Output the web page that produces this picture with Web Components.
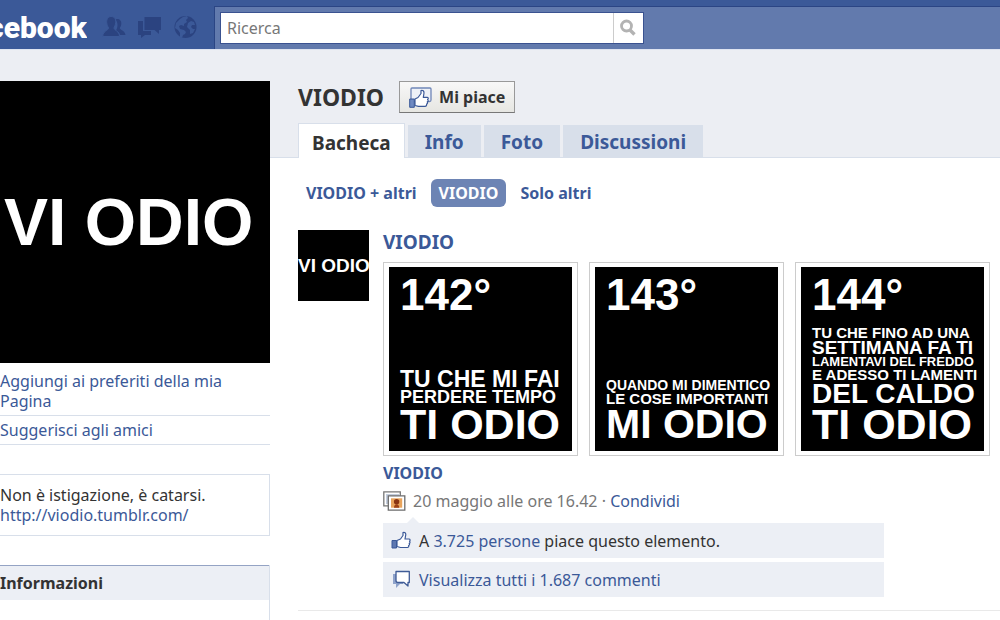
<!DOCTYPE html>
<html lang="it">
<head>
<meta charset="utf-8">
<title>VIODIO</title>
<style>
  body { margin: 0; background: #fff; color: #333; font: 16px/20px "Noto Sans", "Open Sans", sans-serif; }
</style>
</head>
<body>
<fan-page></fan-page>

<script>
const define = (name, html) => customElements.define(name, class extends HTMLElement {
  constructor() {
    super();
    this.attachShadow({ mode: "open" }).innerHTML = html;
  }
});

/* icons */
define("icon-friends", `<style>:host{display:block}svg{display:block}</style>
<svg width="24" height="24" viewBox="0 0 24 24" fill="#2b4380"><path d="M15 4c3 0 4.600 2 4.300 5-.2 2-1 3-1.500 4 0 2 5.200 2.400 5.700 7H18c-.5-2.500-2-3.500-4.200-4.600.9-1.200 1.700-3 1.700-5.400 0-2.500-.9-4.500-2.200-5.500z"/><path d="M9 1.500c3.500 0 5 2.500 4.700 6-.2 2.600-1.400 4-1.700 5.500 0 2.500 5.500 2.800 5.500 8.500H.8c0-5.700 5.700-6 5.700-8.500-.5-1.500-1.700-3-1.800-5.500C4.500 4.200 6 1.500 9 1.500z" stroke="#3b5998"/></svg>`);

define("icon-messages", `<style>:host{display:block}svg{display:block}</style>
<svg width="24" height="24" viewBox="0 0 24 24" fill="#2b4380"><path d="M0 6h5v10h8v4H7l-4 3v-3H0z"/><path d="M6.500 2H23v13h-2v4l-4.500-4h-10z"/></svg>`);

define("icon-globe", `<style>:host{display:block}svg{display:block}</style>
<svg width="24" height="24" viewBox="0 0 24 24"><circle cx="11.500" cy="12" r="11" fill="#2b4380"/><path fill="#3b5998" d="M9 2l4-1 1 2-2 2 1 2-3 2 0 2-3-1-2 1 1 3 4 1 2 2-1 2-2 1-1 3-2-1 0-4-2-3-3-2 1-5 4-4zM17 6l3 1 1 3-3 0-1 2 2 2 2 0-2 4-3 1 0-4-3-3 1-4z"/></svg>`);

define("icon-search", `<style>:host{display:block}svg{display:block}</style>
<svg width="18" height="18" viewBox="0 0 18 18" fill="none" stroke="#b3b3b3"><circle cx="7.500" cy="7" r="5" stroke-width="2.800"/><path d="M11 11l4.500 4.500" stroke-width="3.400"/></svg>`);

define("icon-like", `<style>:host{display:block}svg{display:block}</style>
<svg width="20" height="19" viewBox="0 0 20 19" stroke-linejoin="round"><path d="M1 9.500h4.500V17H1z" fill="#5d77b0" stroke="#3b5998"/><path d="M6 9.500l3.500-1.500L12 4.500V1.500c1.800-.6 2.800.5 2.800 2.200L14 8h4c1.200 0 1.500 1.600.5 2.200.8.600.7 1.900-.3 2.200.6.700.4 1.800-.6 2.100.4.900 0 2-1.200 2H9.500L6 15.500z" fill="#fff" stroke="#3b5998" stroke-width="1.200"/></svg>`);

define("icon-like-page", `<style>:host{display:block}svg{display:block}</style>
<svg width="23" height="21" viewBox="0 0 23 21" stroke-linejoin="round"><path d="M2 13V2q0-1 1-1h18q1 0 1 1v11q0 1.500-1.500 1.500H2z" fill="#eef1f7" stroke="#6f86b8" stroke-width="1.300"/><path d="M.7 12h4.600v8.300H.7z" fill="#6f8ac2" stroke="#3b5998"/><path d="M6 12l3-1.500 3-4V3.500c2-.6 3 .6 3 2.500l-.7 4.300h3.700c1.400 0 1.700 1.700.6 2.300.9.700.7 2-.3 2.300.5.900.2 1.900-.7 2.100.3 1.200-.3 2.300-1.600 2.300H9.500L6 18.500z" fill="#fff" stroke="#3b5998" stroke-width="1.200"/></svg>`);

define("icon-comment", `<style>:host{display:block}svg{display:block}</style>
<svg width="20" height="19" viewBox="0 0 20 19" stroke-linejoin="round"><path d="M2 4v10h3v4l4-4h3V4z" fill="#8fa3cb"/><path d="M5 1.500h13.300v11H17V16l-4-3.500H7c-1.500 0-2-1-2-2z" fill="#fff" stroke="#3f5b96" stroke-width="1.300"/></svg>`);

define("icon-album", `<style>:host{display:block}svg{display:block}</style>
<svg width="23" height="20" viewBox="0 0 23 20"><path d="M.8.8h16.500v14H.8z" fill="#fff" stroke="#777" stroke-width="1.300"/><path d="M3 3h13v10H3z" fill="#c4cede"/><path d="M5.300 4.800h16.500v14.400H5.300z" fill="#fff" stroke="#6c6c6c" stroke-width="1.300"/><path d="M8 7.300h11.200v9.400H8z" fill="#e9a45c"/><circle cx="13.600" cy="10.800" r="2.700" fill="#8a3512"/><path d="M11 16.700c0-2 1-3.500 2.600-3.500s2.600 1.500 2.600 3.500z" fill="#9c4015"/></svg>`);

/* top bar */
define("top-bar", `<style>
  :host { display: flex; height: 50px; background: #3b5998; border-bottom: 1px solid #dfe4f0; box-sizing: border-box; }
  .logo { width: 87px; display: flex; justify-content: flex-end; overflow: hidden; color: #fff; font: 900 30px/56px "Roboto", sans-serif; text-decoration: none; }
  nav { display: flex; gap: 12px; padding: 15px 0 0 15px; }
  nav a { display: block; height: 24px; }
  .rest { flex: 1; margin-left: 16px; padding-top: 6px; }
  .panel { box-sizing: border-box; height: 43px; background: #627aad; border-top: 1px solid #2b4584; border-left: 1px solid #2b4584; padding: 5px 0 0 5px; }
  form { display: flex; width: 424px; height: 32px; box-sizing: border-box; border: 1px solid #3a5290; background: #fff; }
  input { flex: 1; min-width: 0; border: 0; padding: 0 6px; font: 16px/20px "Noto Sans", sans-serif; color: #777; background: none; outline: 0; }
  input::placeholder { color: #777; opacity: 1; }
  button { width: 30px; padding: 0 0 0 5px; border: 0; border-left: 1px solid #ccc; background: #fff; }
</style>
<a class="logo" href="#">cebook</a>
<nav>
  <a href="#" aria-label="Amici"><icon-friends></icon-friends></a>
  <a href="#" aria-label="Messaggi"><icon-messages></icon-messages></a>
  <a href="#" aria-label="Notifiche"><icon-globe></icon-globe></a>
</nav>
<div class="rest"><div class="panel"><form>
  <input type="text" placeholder="Ricerca" aria-label="Ricerca">
  <button type="button" aria-label="Cerca"><icon-search></icon-search></button>
</form></div></div>`);

/* left column */
define("side-links", `<style>
  :host { display: block; padding-top: 4px; }
  ::slotted(a) { display: block; color: #3b5998; text-decoration: none; padding: 4px 0; border-bottom: 1px solid #d8dfea; }
</style><slot></slot>`);

define("side-box", `<style>
  :host { display: block; border: 1px solid #d8dfea; border-left: 0; padding: 10px 0; }
</style><slot></slot>`);

define("side-section", `<style>
  :host { display: block; border-right: 1px solid #d8dfea; }
  h2 { margin: 0; padding: 7px 0; background: #eceff5; border-top: 1px solid #94a3c4; font-size: 16px; line-height: 20px; }
</style><h2><slot></slot></h2>`);

define("page-sidebar", `<style>
  :host { display: flex; flex-direction: column; width: 270px; flex: none; }
  .photo { background: #000; color: #fff; height: 282px; padding-left: 4px; display: flex; align-items: center; font: bold 66px/66px "Liberation Sans", sans-serif; white-space: nowrap; }
  a { color: #3b5998; text-decoration: none; }
  side-box { margin: 29px 0; }
  side-section { flex: 1; }
</style>
<div class="photo">VI ODIO</div>
<side-links><a href="#">Aggiungi ai preferiti della mia Pagina</a><a href="#">Suggerisci agli amici</a></side-links>
<side-box>Non è istigazione, è catarsi.<br><a href="#">http://viodio.tumblr.com/</a></side-box>
<side-section>Informazioni</side-section>`);

/* page title, like button, tabs */
define("page-head", `<style>
  :host { display: block; padding-left: 28px; border-bottom: 1px solid #d8dfea; }
  .title { display: flex; gap: 15px; height: 32px; align-items: center; }
  h1 { margin: 0; font-size: 23px; line-height: 32px; }
  button { display: flex; align-items: center; gap: 7px; height: 32px; padding: 0 9px; border: 1px solid #999; border-bottom-color: #777; background: linear-gradient(#f8f8f8, #e6e6e2); color: #333; font: bold 16px/20px "Noto Sans", sans-serif; }
  nav { display: flex; gap: 3px; align-items: flex-end; margin-top: 10px; }
  nav a { height: 32px; line-height: 34px; padding: 0 17px; background: #d8dfea; color: #3b5998; font-size: 19px; font-weight: bold; text-decoration: none; }
  nav a.on { height: 34px; line-height: 38px; padding: 0 13px; background: #fff; color: #333; border: 1px solid #d8dfea; border-bottom: 0; margin-bottom: -1px; }
</style>
<div class="title"><h1>VIODIO</h1><button type="button"><icon-like-page></icon-like-page>Mi piace</button></div>
<nav><a class="on" href="#">Bacheca</a><a href="#">Info</a><a href="#">Foto</a><a href="#">Discussioni</a></nav>`);

define("wall-filter", `<style>
  :host { display: flex; gap: 6px; }
  a { padding: 4px 8px; border-radius: 6px; color: #3b5998; font-size: 16px; line-height: 20px; font-weight: bold; text-decoration: none; }
  a.on { background: #6d84b4; color: #fff; }
</style>
<a href="#">VIODIO + altri</a><a class="on" href="#">VIODIO</a><a href="#">Solo altri</a>`);

/* a poster: number on top, lines of different sizes at the bottom */
customElements.define("odio-poster", class extends HTMLElement {
  connectedCallback() {
    const lines = JSON.parse(this.getAttribute("lines"));
    this.attachShadow({ mode: "open" }).innerHTML = `<style>
      :host { display: block; flex: none; box-sizing: border-box; width: 195px; height: 194px; padding: 4px; border: 1px solid #ccc; background: #fff; }
      a { box-sizing: border-box; height: 100%; display: flex; flex-direction: column; padding: 8px 0 8px 11px; margin: 0 1px 0 1px; background: #000; color: #fff; font-family: "Liberation Sans", sans-serif; font-weight: bold; white-space: nowrap; text-decoration: none; }
      .n { font-size: 44px; line-height: 40px; margin-bottom: auto; }
    </style><a href="#"><span class="n">${this.getAttribute("number")}</span>${
      lines.map(([text, size, height]) => `<span style="font-size:${size}px;line-height:${height}px">${text}</span>`).join("")
    }</a>`;
  }
});

define("wall-post", `<style>
  :host { display: flex; gap: 14px; padding-bottom: 13px; border-bottom: 1px solid #e9e9e9; }
  .avatar { flex: none; width: 71px; height: 71px; overflow: hidden; background: #000; color: #fff; font: bold 19px/71px "Liberation Sans", sans-serif; white-space: nowrap; text-decoration: none; }
  .body { flex: 1; min-width: 0; }
  .body a { color: #3b5998; text-decoration: none; }
  h3 { margin: 0; font-size: 19px; line-height: 24px; }
  .posters { display: flex; gap: 11px; margin-top: 8px; }
  h4 { margin: 7px 0 0; font-size: 16px; line-height: 20px; }
  .meta { display: flex; align-items: center; gap: 7px; margin-top: 8px; color: #777; }
  .feedback { position: relative; display: grid; gap: 4px; max-width: 501px; margin-top: 12px; }
  .feedback::before { content: ""; position: absolute; left: 24px; top: -6px; border: 6px solid transparent; border-top: 0; border-bottom-color: #eceff5; }
  .row { display: flex; align-items: center; gap: 8px; height: 35px; padding-left: 8px; background: #eceff5; }
</style>
<a class="avatar" href="#">VI ODIO</a>
<div class="body">
  <h3><a href="#">VIODIO</a></h3>
  <div class="posters">
    <odio-poster number="142°" lines='[["TU CHE MI FAI",23,20],["PERDERE TEMPO",18,17],["TI ODIO",43,37]]'></odio-poster>
    <odio-poster number="143°" lines='[["QUANDO MI DIMENTICO",14,13],["LE COSE IMPORTANTI",15,14],["MI ODIO",41,37]]'></odio-poster>
    <odio-poster number="144°" lines='[["TU CHE FINO AD UNA",15,14],["SETTIMANA FA TI",19,16],["LAMENTAVI DEL FREDDO",13,12],["E ADESSO TI LAMENTI",15,13],["DEL CALDO",28,25],["TI ODIO",43,37]]'></odio-poster>
  </div>
  <h4><a href="#">VIODIO</a></h4>
  <div class="meta"><icon-album></icon-album><span>20 maggio alle ore 16.42 · <a href="#">Condividi</a></span></div>
  <div class="feedback">
    <div class="row"><icon-like></icon-like><span>A <a href="#">3.725 persone</a> piace questo elemento.</span></div>
    <div class="row"><icon-comment></icon-comment><a href="#">Visualizza tutti i 1.687 commenti</a></div>
  </div>
</div>`);

define("fan-page", `<style>
  :host { display: flex; flex-direction: column; height: 100vh; overflow: hidden; }
  .content { flex: 1; display: flex; padding-top: 31px; background: linear-gradient(#eceef3 107px, #fff 107px); }
  main { flex: 1; min-width: 0; }
  wall-filter { margin: 21px 0 0 28px; }
  wall-post { margin: 23px 0 0 28px; }
</style>
<top-bar></top-bar>
<div class="content">
  <page-sidebar></page-sidebar>
  <main><page-head></page-head><wall-filter></wall-filter><wall-post></wall-post></main>
</div>`);
</script>
</body>
</html>
